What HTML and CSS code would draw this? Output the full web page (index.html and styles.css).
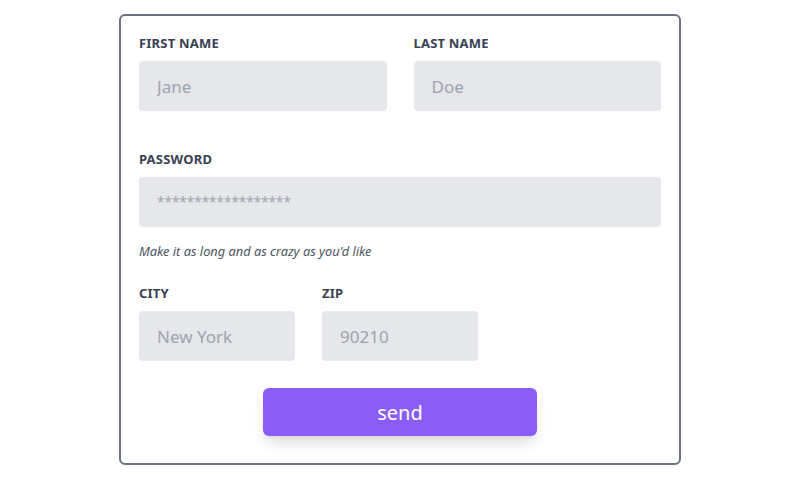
FILE: index.html
```html
<!DOCTYPE html>
<html lang="en">
<head>
<meta charset="utf-8">
<title>Form</title>
<link rel="stylesheet" href="styles.css">
</head>
<body>
<form class="card">
  <div class="row row-2">
    <div class="field">
      <label class="label">First Name</label>
      <input class="input" type="text" placeholder="Jane">
    </div>
    <div class="field">
      <label class="label">Last Name</label>
      <input class="input" type="text" placeholder="Doe">
    </div>
  </div>
  <div class="field">
    <label class="label">Password</label>
    <input class="input input-pass" type="text" placeholder="******************">
    <p class="help">Make it as long and as crazy as you'd like</p>
  </div>
  <div class="row row-3">
    <div class="field">
      <label class="label">City</label>
      <input class="input" type="text" placeholder="New York">
    </div>
    <div class="field">
      <label class="label">Zip</label>
      <input class="input" type="text" placeholder="90210">
    </div>
  </div>
  <div class="actions">
    <button class="btn" type="button">send</button>
  </div>
</form>
</body>
</html>
```

FILE: styles.css
```css
* { box-sizing: border-box; }
html, body { margin: 0; padding: 0; background: #ffffff; }
body {
  font-family: "Noto Sans", "Open Sans", sans-serif;
  color: #374151;
}
.card {
  width: 562px;
  margin: 14px auto 0;
  border: 2px solid #6b7280;
  border-radius: 6px;
  padding: 19px 18px 27px;
  background: #fff;
}
.row { display: grid; column-gap: 27px; }
.row-2 { grid-template-columns: 1fr 1fr; margin-bottom: 40px; }
.row-3 { grid-template-columns: 156px 156px 1fr; }
.field { display: flex; flex-direction: column; }
.label {
  display: block;
  font-size: 13px;
  line-height: 16px;
  font-weight: 700;
  text-transform: uppercase;
  letter-spacing: 0.2px;
  color: #374151;
  margin-bottom: 10px;
}
.input {
  display: block;
  width: 100%;
  height: 50px;
  border: 1px solid #e5e7eb;
  background: #e5e7eb;
  border-radius: 4px;
  padding: 0 17px;
  font-family: inherit;
  font-size: 17px;
  color: #374151;
  outline: none;
}
.input::placeholder { color: #9ca3af; opacity: 1; }
.input-pass { font-size: 13.5px; }
.help {
  margin: 16px 0 26px;
  font-size: 12.8px;
  line-height: 16px;
  font-style: italic;
  color: #4b5563;
}
.actions { display: flex; justify-content: center; margin-top: 27px; }
.btn {
  width: 274px;
  height: 48px;
  border: 0;
  border-radius: 6px;
  background: #8b5cf6;
  color: #ffffff;
  font-family: inherit;
  font-size: 20px;
  box-shadow: 0 10px 15px -3px rgba(0,0,0,0.12), 0 4px 6px -2px rgba(0,0,0,0.06);
  cursor: pointer;
}
```
